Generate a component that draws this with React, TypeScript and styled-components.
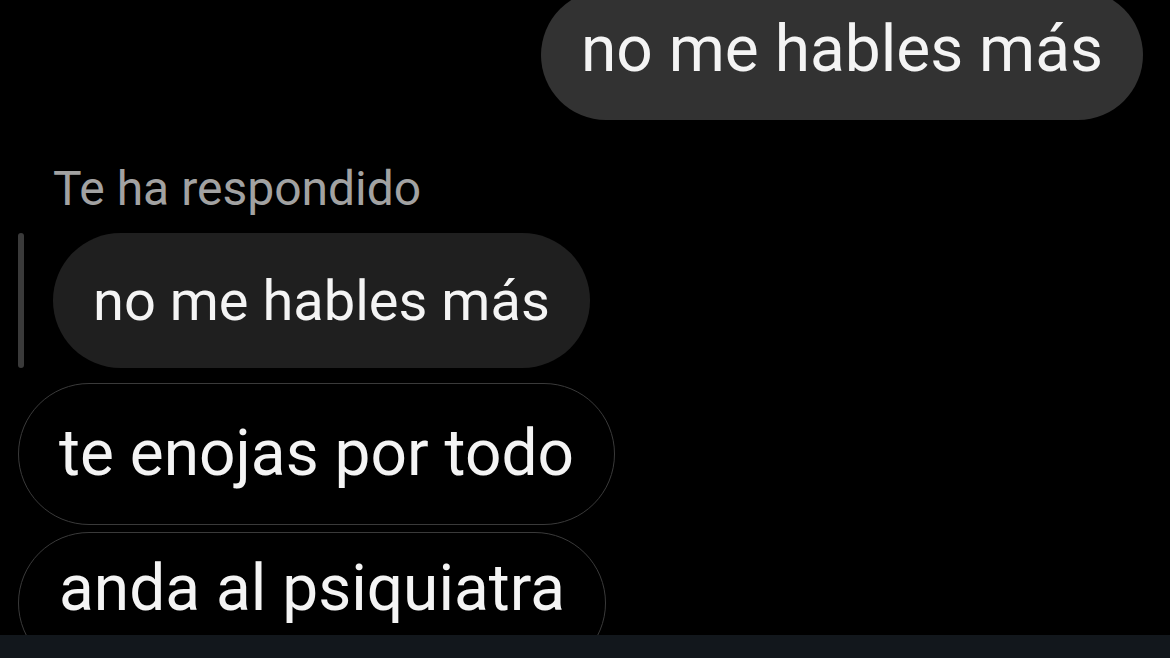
import React from "react";
import styled, { createGlobalStyle } from "styled-components";

const GlobalStyle = createGlobalStyle`
  html, body {
    margin: 0;
    padding: 0;
    background: #000;
  }
  body {
    font-family: Roboto, "Noto Sans", "Liberation Sans", sans-serif;
    -webkit-font-smoothing: antialiased;
  }
`;

const Screen = styled.div`
  width: 1170px;
  height: 658px;
  display: flex;
  flex-direction: column;
  background: #000;
  overflow: hidden;
`;

const Thread = styled.div`
  flex: 1;
  min-height: 0;
  overflow: hidden;
  display: flex;
  flex-direction: column;
  padding: 0 27px 0 18px;
`;

const Footer = styled.div`
  height: 23px;
  flex: none;
  background: #12171c;
`;

type BubbleProps = {
  $variant: "sent" | "quoted" | "outline";
  $height: number;
  $size: number;
  $lift?: number;
};

const Bubble = styled.div<BubbleProps>`
  box-sizing: border-box;
  height: ${(p) => p.$height}px;
  flex: none;
  display: inline-flex;
  align-items: center;
  padding: 0 40px ${(p) => p.$lift ?? 0}px;
  border-radius: ${(p) => p.$height / 2}px;
  font-size: ${(p) => p.$size}px;
  line-height: 1;
  color: #f4f4f4;
  white-space: nowrap;
  background: ${(p) =>
    p.$variant === "sent" ? "#323232" : p.$variant === "quoted" ? "#1f1f1f" : "#000"};
  border: ${(p) => (p.$variant === "outline" ? "1.5px solid #3a3a3a" : "none")};
`;

const SentRow = styled.div`
  display: flex;
  justify-content: flex-end;
  margin-top: -10px;
`;

const ReplyLabel = styled.div`
  margin: 45px 0 0 35px;
  font-size: 48px;
  line-height: 48px;
  color: #a2a2a2;
`;

const QuoteRow = styled.div`
  display: flex;
  align-items: stretch;
  gap: 29px;
  margin-top: 20px;
`;

const QuoteBar = styled.div`
  width: 6px;
  flex: none;
  border-radius: 3px;
  background: #3a3a3a;
`;

const Stack = styled.div<{ $gap: number }>`
  display: flex;
  flex-direction: column;
  align-items: flex-start;
  gap: ${(p) => p.$gap}px;
  margin-top: 15px;
`;

export default function App() {
  return (
    <>
      <GlobalStyle />
      <Screen>
        <Thread>
          <SentRow>
            <Bubble $variant="sent" $height={130} $size={64} $lift={10}>
              no me hables más
            </Bubble>
          </SentRow>
          <ReplyLabel>Te ha respondido</ReplyLabel>
          <QuoteRow>
            <QuoteBar />
            <Bubble $variant="quoted" $height={135} $size={56}>
              no me hables más
            </Bubble>
          </QuoteRow>
          <Stack $gap={7}>
            <Bubble $variant="outline" $height={142} $size={64}>
              te enojas por todo
            </Bubble>
            <Bubble $variant="outline" $height={142} $size={64} $lift={28}>
              anda al psiquiatra
            </Bubble>
          </Stack>
        </Thread>
        <Footer />
      </Screen>
    </>
  );
}
